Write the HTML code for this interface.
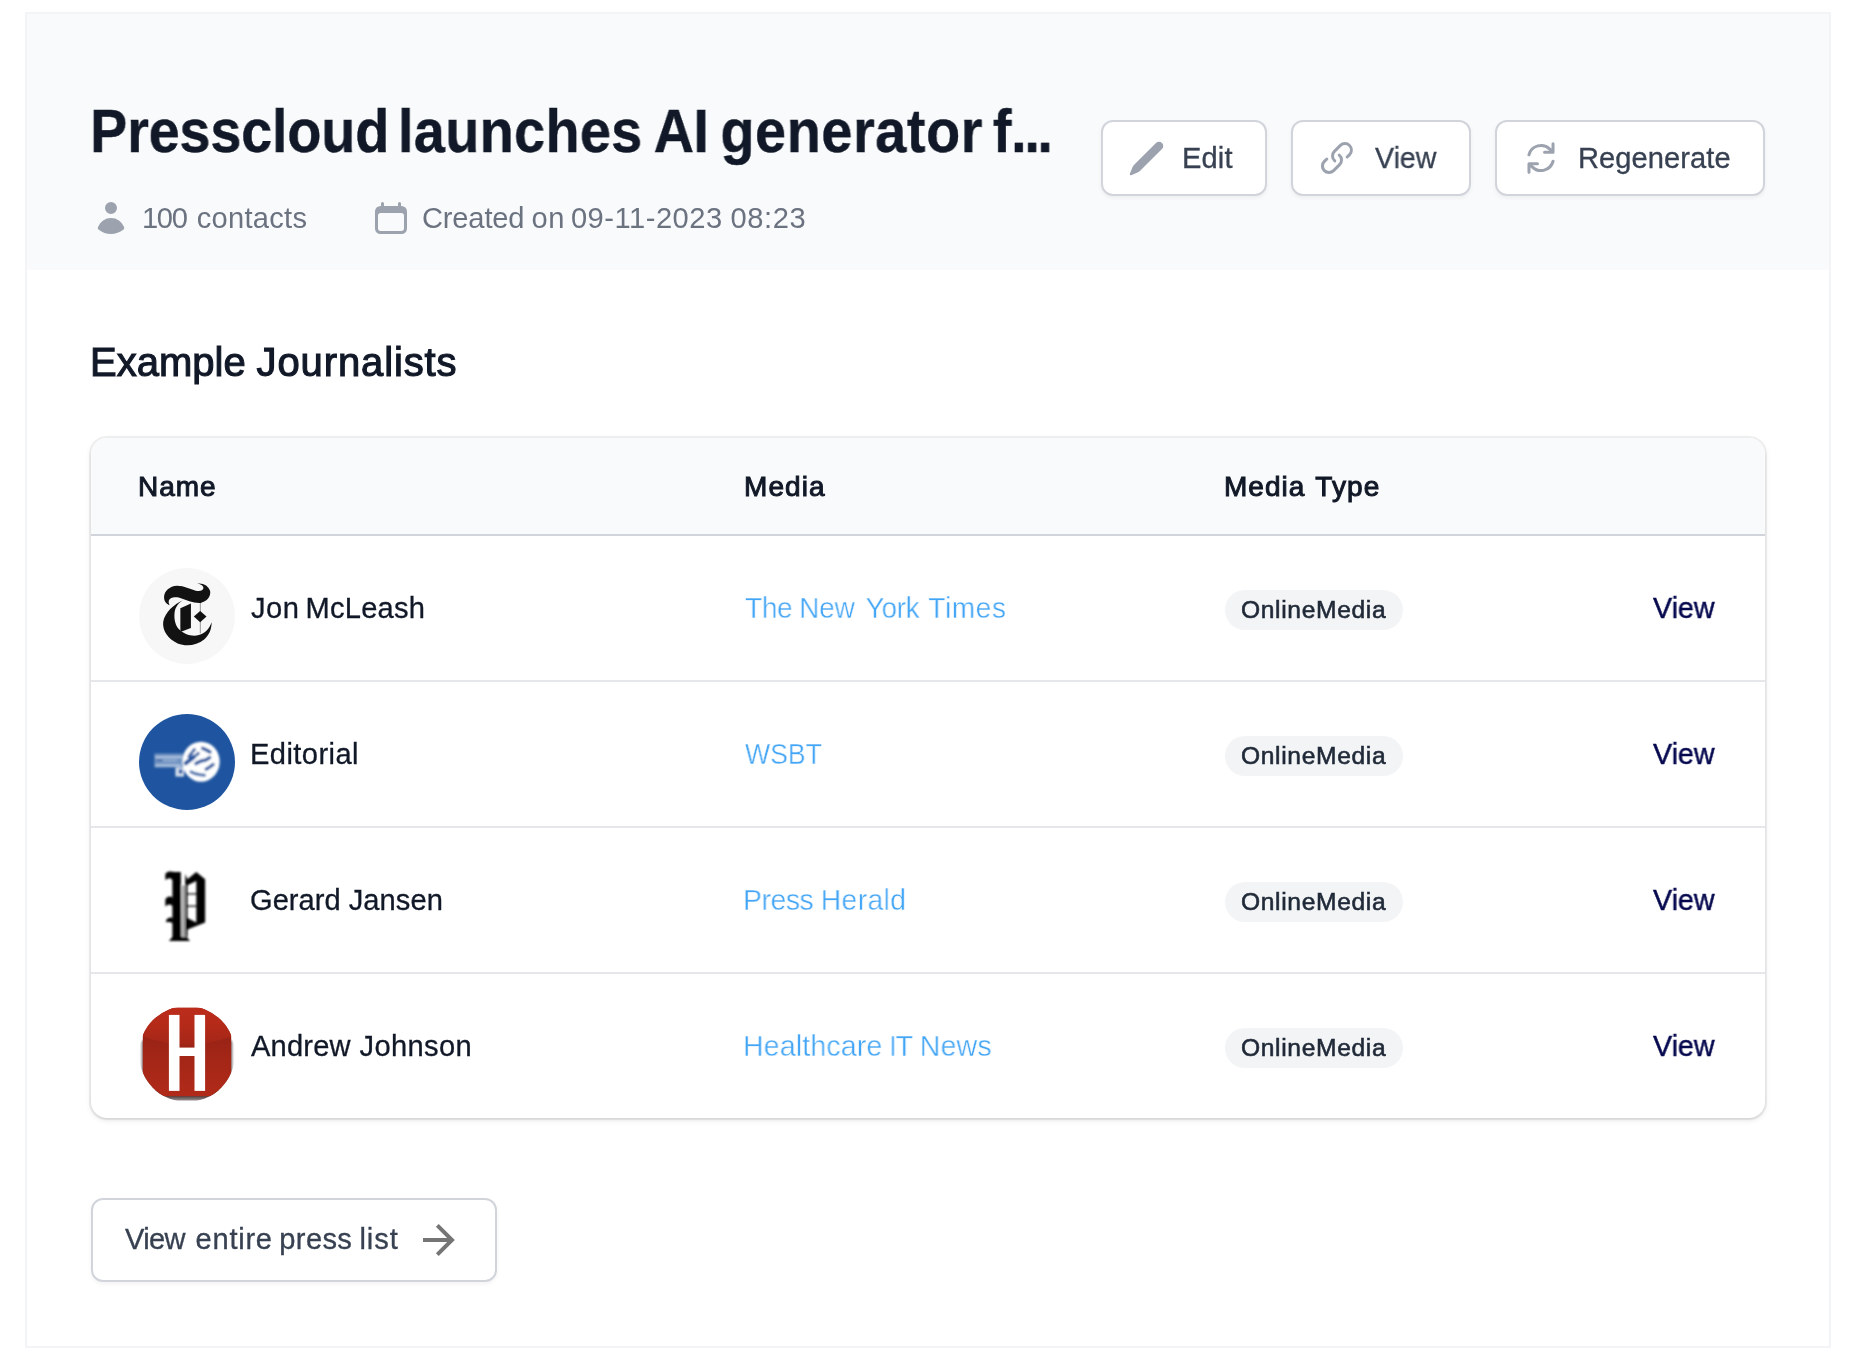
<!DOCTYPE html>
<html lang="en">
<head>
<meta charset="utf-8">
<meta name="viewport" content="width=1866">
<title>Presscloud press list</title>
<style>
*{box-sizing:border-box;margin:0;padding:0}
html,body{width:1866px;height:1358px;background:#fff;overflow:hidden}
body{position:relative;font-family:"Liberation Sans",sans-serif;-webkit-font-smoothing:antialiased}
.frame{position:absolute;left:25px;top:12px;width:1806px;height:1336px;border:2px solid #f3f4f6;background:#fff}
.head{position:absolute;left:27px;top:14px;width:1802px;height:256px;background:#f9fafb}
.t{position:absolute;white-space:nowrap;transform-origin:0 50%;font-style:normal;will-change:transform}
.t span{display:inline-block}
h1,h2{margin:0}
.btn{position:absolute;display:block;padding:0;margin:0;font:inherit;color:inherit;text-align:left;overflow:visible;height:76px;border:2px solid #d1d5db;border-radius:12px;background:#fff;box-shadow:0 2px 4px rgba(0,0,0,.05)}
.ic{position:absolute;width:40px;height:40px;display:block}
.card{position:absolute;left:91px;top:438px;width:1674px;height:680px;border-radius:16px;background:#fff;box-shadow:0 0 0 2px rgba(0,0,0,.05),0 2px 6px rgba(0,0,0,.1),0 2px 4px -2px rgba(0,0,0,.1);overflow:hidden}
.thead{position:absolute;left:0;top:0;width:100%;height:98px;background:#f9fafb;border-bottom:2px solid #d1d5db}
.sep{position:absolute;left:0;width:100%;height:2px;background:#e5e7eb}
.row{position:absolute;left:0;width:100%;height:144px}
.av{position:absolute;width:96px;height:96px;border-radius:50%;overflow:hidden;display:block}
.badge{position:absolute;width:178px;height:40px;border-radius:20px;background:#f3f4f6}
</style>
</head>
<body>
<div class="frame"></div>
<header class="head"></header>
<h1 class="t title" style="left:90.11px;top:91.17px;font-size:61.7px;line-height:80px;color:#111827;font-weight:700;transform:scaleX(0.9051);-webkit-text-stroke:0.4px #111827"><span style="letter-spacing:-0.22px">Presscloud</span> <span style="letter-spacing:0.33px;margin-left:-7.16px">launches</span> <span style="letter-spacing:-0.63px;margin-left:-4.80px">AI</span> <span style="letter-spacing:0.63px;margin-left:-3.96px">generator</span> <span style="letter-spacing:0.00px;margin-left:-6.13px">f</span><span style="letter-spacing:-2.63px;margin-left:-0.46px">...</span></h1>
<div class="metas">
<svg class="ic" style="left:91px;top:198px;width:40px;height:40px" viewBox="0 0 20 20" ><path fill="#9ca3af" d="M10 8a3 3 0 100-6 3 3 0 000 6zM3.465 14.493a1.23 1.23 0 00.41 1.412A9.957 9.957 0 0010 18c2.31 0 4.438-.784 6.131-2.1.43-.333.604-.903.408-1.41a7.002 7.002 0 00-13.074.003z"/></svg>
<span class="t meta" style="left:141.78px;top:199.12px;font-size:29.1px;line-height:38px;color:#6b7280;font-weight:400"><span style="letter-spacing:-1.35px">100</span> <span style="letter-spacing:0.28px;margin-left:2.14px">contacts</span></span>
<svg class="ic" style="left:371px;top:198px;width:40px;height:40px" viewBox="0 0 20 20" ><path fill="#9ca3af" fill-rule="evenodd" clip-rule="evenodd" d="M5.75 2a.75.75 0 01.75.75V4h7V2.75a.75.75 0 011.5 0V4h.25A2.75 2.75 0 0118 6.75v8.5A2.75 2.75 0 0115.25 18H4.75A2.75 2.75 0 012 15.25v-8.5A2.75 2.75 0 014.75 4H5V2.75A.75.75 0 015.75 2zm-1 5.5c-.69 0-1.25.56-1.25 1.25v6.5c0 .69.56 1.25 1.25 1.25h10.5c.69 0 1.25-.56 1.25-1.25v-6.5c0-.69-.56-1.25-1.25-1.25H4.75z"/></svg>
<span class="t meta" style="left:422.44px;top:199.12px;font-size:29.1px;line-height:38px;color:#6b7280;font-weight:400"><span style="letter-spacing:-0.17px">Created</span> <span style="letter-spacing:0.48px;margin-left:-0.86px">on</span> <span style="letter-spacing:0.51px;margin-left:-2.10px">09-11-2023</span> <span style="letter-spacing:0.64px;margin-left:-0.38px">08:23</span></span>
</div>
<div class="actions">
<button class="btn" type="button" style="left:1101px;top:120px;width:166px"><svg class="ic" style="left:24.00px;top:16.00px;width:40px;height:40px" viewBox="0 0 20 20" ><path fill="#9ca3af" d="M2.695 14.763l-1.262 3.154a.5.5 0 00.65.65l3.155-1.262a4 4 0 001.343-.885L17.5 5.5a2.121 2.121 0 00-3-3L3.58 13.42a4 4 0 00-.885 1.343z"/></svg><span class="t btxt" style="left:79.18px;top:16.82px;font-size:29.1px;line-height:38px;color:#374151;font-weight:400;-webkit-text-stroke:0.3px #374151"><span style="letter-spacing:0.14px">Edit</span></span></button>
<button class="btn" type="button" style="left:1291px;top:120px;width:180px"><svg class="ic" style="left:24.00px;top:16.00px;width:40px;height:40px" viewBox="0 0 20 20" ><path fill="#9ca3af" d="M12.232 4.232a2.5 2.5 0 013.536 3.536l-1.225 1.224a.75.75 0 001.061 1.06l1.224-1.224a4 4 0 00-5.656-5.656l-3 3a4 4 0 00.225 5.865.75.75 0 00.977-1.138 2.5 2.5 0 01-.142-3.667l3-3z"/><path fill="#9ca3af" d="M11.603 7.963a.75.75 0 00-.977 1.138 2.5 2.5 0 01.142 3.667l-3 3a2.5 2.5 0 01-3.536-3.536l1.225-1.224a.75.75 0 00-1.061-1.06l-1.224 1.224a4 4 0 105.656 5.656l3-3a4 4 0 00-.225-5.865z"/></svg><span class="t btxt" style="left:82.05px;top:16.82px;font-size:29.1px;line-height:38px;color:#374151;font-weight:400;transform:scaleX(0.9825);-webkit-text-stroke:0.3px #374151"><span style="letter-spacing:0.00px">View</span></span></button>
<button class="btn" type="button" style="left:1495px;top:120px;width:270px"><svg class="ic" style="left:24.00px;top:16.00px;width:40px;height:40px" viewBox="0 0 20 20" ><path fill="#9ca3af" fill-rule="evenodd" clip-rule="evenodd" d="M15.312 11.424a5.5 5.5 0 01-9.201 2.466l-.312-.311h2.433a.75.75 0 000-1.500H3.989a.75.75 0 00-.75.750v4.242a.75.75 0 001.500 0v-2.430l.31.310a7 7 0 0011.712-3.138.75.75 0 00-1.449-.390zm1.230-3.723a.75.75 0 00.219-.530V2.929a.75.75 0 00-1.500 0V5.360l-.31-.310A7 7 0 003.239 8.188a.75.75 0 101.448.389A5.500 5.500 0 0113.890 6.110l.311.310h-2.432a.75.75 0 000 1.500h4.243a.75.75 0 00.530-.219z"/></svg><span class="t btxt" style="left:80.58px;top:16.82px;font-size:29.1px;line-height:38px;color:#374151;font-weight:400;-webkit-text-stroke:0.3px #374151"><span style="letter-spacing:0.06px">Regenerate</span></span></button>
</div>
<main>
<h2 class="t h2" style="left:90.33px;top:335.74px;font-size:40.0px;line-height:52px;color:#111827;font-weight:400;-webkit-text-stroke:1.1px #111827"><span style="letter-spacing:0.02px">Example</span> <span style="letter-spacing:0.89px;margin-left:-0.38px">Journalists</span></h2>
<div class="card"><div class="thead"><span class="t th" style="left:47.41px;top:31.10px;font-size:28.0px;line-height:36px;color:#111827;font-weight:400;-webkit-text-stroke:1.0px #111827"><span style="letter-spacing:0.98px">Name</span></span><span class="t th" style="left:652.61px;top:31.10px;font-size:28.0px;line-height:36px;color:#111827;font-weight:400;-webkit-text-stroke:1.0px #111827"><span style="letter-spacing:1.06px">Media</span></span><span class="t th" style="left:1132.91px;top:31.10px;font-size:28.0px;line-height:36px;color:#111827;font-weight:400;-webkit-text-stroke:1.0px #111827"><span style="letter-spacing:1.04px">Media</span> <span style="letter-spacing:1.19px;margin-left:1.92px">Type</span></span></div><div class="row" style="top:98px"><svg class="av" style="left:48.00px;top:32.00px" viewBox="103 88 1085 1090"><rect x="103" y="88" width="1085" height="1090" fill="#f7f7f7"/>
<g fill="#121212">
<path d="M385 420C385 350 450 295 530 290C610 288 680 330 745 345C790 355 830 345 832 315C832 285 795 270 760 265C830 255 890 290 908 350C918 410 880 465 800 485C720 490 640 450 560 425C500 410 445 425 438 465C436 485 442 500 450 510C410 500 385 465 385 420Z"/>
<path d="M605 452C500 500 395 590 375 700C365 800 430 890 540 945C640 985 760 965 840 900C900 850 925 780 925 705C900 780 850 830 780 850C700 870 610 840 560 790C515 745 495 670 505 590C515 530 550 480 605 452Z"/>
<path d="M570 545L690 490V770L570 815Z"/>
<path d="M795 575L867 640L795 705L723 640Z"/>
<rect x="792" y="480" width="6" height="350" opacity=".8"/>
</g></svg>
<span class="t nm" style="left:159.50px;top:53.42px;font-size:29.1px;line-height:38px;color:#111827;font-weight:400;-webkit-text-stroke:0.3px #111827"><span style="letter-spacing:0.54px">Jon</span> <span style="letter-spacing:0.21px;margin-left:-2.03px">McLeash</span></span>
<span class="t md" style="left:653.66px;top:53.12px;font-size:29.1px;line-height:38px;color:#42a5f5;font-weight:400;transform:scaleX(0.9630);-webkit-text-stroke:0.4px #fff"><span style="letter-spacing:-0.32px">The</span> <span style="letter-spacing:-0.27px;margin-left:-0.94px">New</span> <span style="letter-spacing:-0.43px;margin-left:3.50px">York</span> <span style="letter-spacing:0.62px;margin-left:1.48px">Times</span></span>
<span class="badge" style="left:1134.00px;top:54.00px"></span>
<span class="t bd" style="left:1150.00px;top:57.78px;font-size:24.6px;line-height:32px;color:#1f2937;font-weight:400;-webkit-text-stroke:0.6px #1f2937"><span style="letter-spacing:0.65px">OnlineMedia</span></span>
<span class="t vw" style="left:1562.02px;top:53.02px;font-size:29.1px;line-height:38px;color:#05084e;font-weight:400;transform:scaleX(0.9848);-webkit-text-stroke:0.45px #05084e"><span style="letter-spacing:0.00px">View</span></span></div>
<div class="row" style="top:244px"><svg class="av" style="left:48.00px;top:32.00px" viewBox="0 0 96 96"><defs><filter id="bl" x="-20%" y="-20%" width="140%" height="140%"><feGaussianBlur stdDeviation="0.85"/></filter></defs>
<rect width="96" height="96" fill="#1f55a0"/>
<g filter="url(#bl)">
<rect x="15.500" y="39.500" width="29" height="14" fill="#fff" opacity=".36"/>
<rect x="16" y="42.300" width="27" height="1.800" fill="#fff" opacity=".55"/>
<rect x="16" y="50.500" width="26" height="2" fill="#fff" opacity=".5"/>
<rect x="24" y="45.500" width="14" height="2" fill="#fff" opacity=".25"/>
<rect x="17.500" y="45.500" width="6" height="1.800" fill="#1f55a0" opacity=".8"/>
<rect x="36.500" y="53.500" width="8.500" height="9" fill="#fff" opacity=".85"/>
<rect x="39.700" y="55" width="3.800" height="5" fill="#2f63ad"/>
<ellipse cx="62" cy="47.700" rx="18.700" ry="20" fill="#fff"/>
<g fill="none" stroke="#1f55a0" stroke-linecap="round">
<path d="M46.800 49.200L55 42.800" stroke-width="4.200"/>
<path d="M51.500 40.300l1.500-1.600M54.300 36.600l1.200-1M57.800 40.800l1.500-1.500M50 42.500l1-.8" stroke-width="3"/>
<path d="M63.500 34.300l3.500 1.500 4 2.200" stroke-width="3.300"/>
<path d="M57 49.600l5.500-2.800 4-.6 4.200-2.600" stroke-width="3.400"/>
<path d="M67.200 55.200l3.600-2.200 3.300-2.600" stroke-width="3.200"/>
<path d="M52 57.800l4.500 2 4.500 1 4.500.5" stroke-width="3" opacity=".85"/>
</g></g></svg>
<span class="t nm" style="left:158.98px;top:53.42px;font-size:29.1px;line-height:38px;color:#111827;font-weight:400;-webkit-text-stroke:0.3px #111827"><span style="letter-spacing:0.43px">Editorial</span></span>
<span class="t md" style="left:654.00px;top:53.12px;font-size:29.1px;line-height:38px;color:#42a5f5;font-weight:400;transform:scaleX(0.9155);-webkit-text-stroke:0.4px #fff"><span style="letter-spacing:0.00px">WSBT</span></span>
<span class="badge" style="left:1134.00px;top:54.00px"></span>
<span class="t bd" style="left:1150.00px;top:57.78px;font-size:24.6px;line-height:32px;color:#1f2937;font-weight:400;-webkit-text-stroke:0.6px #1f2937"><span style="letter-spacing:0.65px">OnlineMedia</span></span>
<span class="t vw" style="left:1562.02px;top:53.02px;font-size:29.1px;line-height:38px;color:#05084e;font-weight:400;transform:scaleX(0.9848);-webkit-text-stroke:0.45px #05084e"><span style="letter-spacing:0.00px">View</span></span></div>
<div class="row" style="top:390px"><svg class="av" style="left:48.00px;top:32.00px;border-radius:0" viewBox="102 113 1086 1086"><defs><filter id="b3"><feGaussianBlur stdDeviation="10"/></filter></defs>
<g filter="url(#b3)">
<path fill="#000" d="M400 270C420 240 470 240 500 250H575L580 1000H480V340C450 300 420 330 400 340Z"/>
<path fill="#000" d="M400 560C420 520 460 520 485 540V640C450 600 420 620 400 640Z"/>
<path fill="#000" d="M410 790C440 760 470 760 485 770V830C450 810 430 815 410 820Z"/>
<rect x="585" y="400" width="42" height="590" fill="#a8a8a8"/>
<path fill="#000" d="M625 270L650 330L750 250L850 330V820L650 900V770L750 820V350L650 400V980H625Z"/>
<rect x="640" y="490" width="115" height="14" fill="#000"/><rect x="640" y="628" width="115" height="14" fill="#000"/>
<path fill="#000" d="M440 1030L480 985H640L680 1030Z"/>
</g></svg>
<span class="t nm" style="left:159.19px;top:53.42px;font-size:29.1px;line-height:38px;color:#111827;font-weight:400;-webkit-text-stroke:0.3px #111827"><span style="letter-spacing:0.03px">Gerard</span> <span style="letter-spacing:0.07px;margin-left:-0.10px">Jansen</span></span>
<span class="t md" style="left:652.38px;top:53.12px;font-size:29.1px;line-height:38px;color:#42a5f5;font-weight:400;transform:scaleX(0.9744);-webkit-text-stroke:0.4px #fff"><span style="letter-spacing:-0.46px">Press</span> <span style="letter-spacing:0.37px;margin-left:-0.45px">Herald</span></span>
<span class="badge" style="left:1134.00px;top:54.00px"></span>
<span class="t bd" style="left:1150.00px;top:57.78px;font-size:24.6px;line-height:32px;color:#1f2937;font-weight:400;-webkit-text-stroke:0.6px #1f2937"><span style="letter-spacing:0.65px">OnlineMedia</span></span>
<span class="t vw" style="left:1562.02px;top:53.02px;font-size:29.1px;line-height:38px;color:#05084e;font-weight:400;transform:scaleX(0.9848);-webkit-text-stroke:0.45px #05084e"><span style="letter-spacing:0.00px">View</span></span></div>
<div class="row" style="top:536px"><svg class="av" style="left:48.00px;top:32.00px" viewBox="0 0 96 96"><defs>
<linearGradient id="rg" x1="0" y1="0" x2="0" y2="1"><stop offset="0" stop-color="#982315"/><stop offset=".33" stop-color="#982315"/><stop offset=".55" stop-color="#a32617"/><stop offset="1" stop-color="#b12a19"/></linearGradient>
<linearGradient id="rt" x1="0" y1="0" x2="0" y2="1"><stop offset="0" stop-color="#bc2c1b"/><stop offset=".5" stop-color="#b42a19"/><stop offset="1" stop-color="#a42617"/></linearGradient>
<linearGradient id="sh" x1="0" y1="0" x2="0" y2="1"><stop offset="0" stop-color="#2a1c1c"/><stop offset=".55" stop-color="#4a3a3a"/><stop offset="1" stop-color="#9a9090"/></linearGradient><filter id="b5" x="-20%" y="-20%" width="140%" height="140%"><feGaussianBlur stdDeviation="0.5"/></filter><filter id="b4" x="-20%" y="-20%" width="140%" height="140%"><feGaussianBlur stdDeviation="1.1"/></filter></defs>
<rect width="96" height="96" fill="#fff"/>
<rect x="2.6" y="34" width="90.800" height="54" rx="3" fill="#5a5050" opacity=".75" filter="url(#b4)"/><rect x="10" y="84" width="76" height="10.500" rx="4" fill="url(#sh)" filter="url(#b5)"/>
<rect x="3.8" y="1.8" width="88.400" height="88.400" fill="url(#rg)"/>
<path d="M3.800 1.800H92.200V30.500Q48 46.500 3.800 30.500Z" fill="url(#rt)"/>
<rect x="29.900" y="8.900" width="10.600" height="76" fill="#fff"/><rect x="55.500" y="8.900" width="10.600" height="76" fill="#fff"/><rect x="40" y="41.600" width="16" height="8.400" fill="#fff"/>
</svg>
<span class="t nm" style="left:160.15px;top:53.42px;font-size:29.1px;line-height:38px;color:#111827;font-weight:400;-webkit-text-stroke:0.3px #111827"><span style="letter-spacing:0.18px">Andrew</span> <span style="letter-spacing:0.38px;margin-left:0.64px">Johnson</span></span>
<span class="t md" style="left:652.37px;top:53.12px;font-size:29.1px;line-height:38px;color:#42a5f5;font-weight:400;transform:scaleX(0.9828);-webkit-text-stroke:0.4px #fff"><span style="letter-spacing:0.11px">Healthcare</span> <span style="letter-spacing:-1.32px;margin-left:-1.37px">IT</span> <span style="letter-spacing:0.11px;margin-left:0.02px">News</span></span>
<span class="badge" style="left:1134.00px;top:54.00px"></span>
<span class="t bd" style="left:1150.00px;top:57.78px;font-size:24.6px;line-height:32px;color:#1f2937;font-weight:400;-webkit-text-stroke:0.6px #1f2937"><span style="letter-spacing:0.65px">OnlineMedia</span></span>
<span class="t vw" style="left:1562.02px;top:53.02px;font-size:29.1px;line-height:38px;color:#05084e;font-weight:400;transform:scaleX(0.9848);-webkit-text-stroke:0.45px #05084e"><span style="letter-spacing:0.00px">View</span></span></div><div class="sep" style="top:242px"></div><div class="sep" style="top:388px"></div><div class="sep" style="top:534px"></div></div>
<a class="btn" style="left:91px;top:1198px;width:406px;height:84px"><svg class="ic" style="left:322.00px;top:20.00px" viewBox="415 1220 40 40"><path fill="none" stroke="#757575" stroke-width="4" stroke-linejoin="miter" d="M423 1240H452.500M437.300 1225.300L452 1240L437.300 1254.700"/></svg><span class="t btxt" style="left:31.85px;top:20.42px;font-size:29.1px;line-height:38px;color:#374151;font-weight:400;-webkit-text-stroke:0.3px #374151"><span style="letter-spacing:-0.67px">View</span> <span style="letter-spacing:0.74px;margin-left:2.63px">entire</span> <span style="letter-spacing:0.37px;margin-left:-1.62px">press</span> <span style="letter-spacing:0.95px;margin-left:-0.98px">list</span></span></a>
</main>
</body>
</html>
